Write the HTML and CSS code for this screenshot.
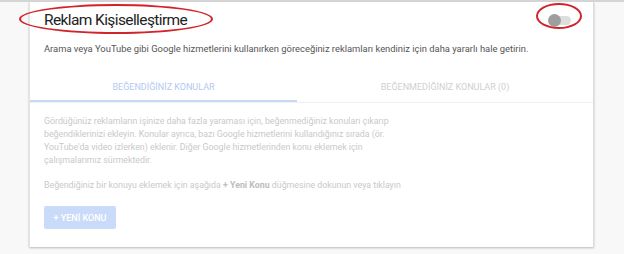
FILE: index.html
```html
<!DOCTYPE html>
<html lang="tr">
<head>
  <meta charset="UTF-8" />
  <title>Reklam Kişiselleştirme</title>
  <link rel="stylesheet" href="styles.css">
</head>
<body>

  <div class="page">
    <div class="card">

      <div class="card-head">
        <h1 class="title">Reklam Kişiselleştirme</h1>
        <div class="toggle" role="switch" aria-checked="false">
          <span class="track"></span>
          <span class="knob"></span>
        </div>
        <span class="mark mark-title"></span>
        <span class="mark mark-toggle"></span>
      </div>

      <p class="intro">Arama veya YouTube gibi Google hizmetlerini kullanırken göreceğiniz reklamları kendiniz için daha yararlı hale getirin.</p>

      <div class="tabs">
        <div class="tab active">BEĞENDİĞİNİZ KONULAR</div>
        <div class="tab">BEĞENMEDİĞİNİZ KONULAR (0)</div>
      </div>

      <div class="tab-body">
        <p class="info">Gördüğünüz reklamların işinize daha fazla yaraması için, beğenmediğiniz konuları çıkarıp beğendiklerinizi ekleyin. Konular ayrıca, bazı Google hizmetlerini kullandığınız sırada (ör. YouTube'da video izlerken) eklenir. Diğer Google hizmetlerinden konu eklemek için çalışmalarımız sürmektedir.</p>
        <p class="hint">Beğendiğiniz bir konuyu eklemek için aşağıda <b>+ Yeni Konu</b> düğmesine dokunun veya tıklayın</p>
        <button class="btn-new" disabled>+ YENİ KONU</button>
      </div>

    </div>
  </div>

</body>
</html>
```

FILE: styles.css
```css
* {
  margin: 0;
  padding: 0;
  box-sizing: border-box;
  font-family: Roboto, 'Liberation Sans', sans-serif;
}

body {
  background-color: #f8f8f8;
  border-top: 2px solid #d4d4d4;
  height: 254px;
  overflow: hidden;
}

.page {
  padding: 0 30px 0 29px;
}

.card {
  background-color: #fff;
  border-left: 1px solid #e4e4e4;
  border-right: 1px solid #dcdcdc;
  box-shadow: 0 1px 2px rgba(0,0,0,0.25);
  height: 245px;
}

.card-head {
  position: relative;
  display: flex;
  align-items: center;
  justify-content: space-between;
  padding: 5px 22px 0 14px;
  height: 31px;
}

.title {
  font-size: 15.5px;
  font-weight: 400;
  letter-spacing: -0.6px;
  color: #222;
}

.toggle {
  position: relative;
  width: 24px;
  height: 13px;
}

.toggle .track {
  position: absolute;
  left: 4px;
  top: 2px;
  width: 20px;
  height: 9px;
  border-radius: 5px;
  background-color: #dedede;
}

.toggle .knob {
  position: absolute;
  left: 1px;
  top: 0;
  width: 13px;
  height: 13px;
  border-radius: 50%;
  background-color: #9e9e9e;
}

.mark {
  position: absolute;
  border: 2px solid #d2232a;
  border-radius: 50%;
}

.mark-title {
  left: -11px;
  top: 2px;
  width: 194px;
  height: 30px;
}

.mark-toggle {
  right: 11px;
  top: 1px;
  width: 46px;
  height: 26px;
}

.intro {
  font-size: 9.4px;
  color: #555;
  padding: 10px 14px 0;
  height: 39px;
}

.tabs {
  display: grid;
  grid-template-columns: 267px 1fr;
  border-bottom: 1px solid #f0f0f0;
}

.tab {
  text-align: center;
  font-size: 9px;
  color: #cfcfcf;
  padding: 10px 0 9px;
  height: 30px;
}

.tab.active {
  color: #b3c9f1;
  border-bottom: 2px solid #c8d9f7;
}

.tab-body {
  padding: 12px 14px 0;
}

.tab-body p {
  font-size: 8.8px;
  line-height: 13px;
  color: #c9c9c9;
  margin-bottom: 12px;
}

.tab-body .info {
  max-width: 352px;
}

.tab-body b {
  color: #bdbdbd;
}

.btn-new {
  margin-top: 2px;
  width: 72px;
  height: 23px;
  border: none;
  border-radius: 2px;
  background-color: #c9dbf8;
  color: #fff;
  font-size: 9px;
  font-weight: 500;
}
```
